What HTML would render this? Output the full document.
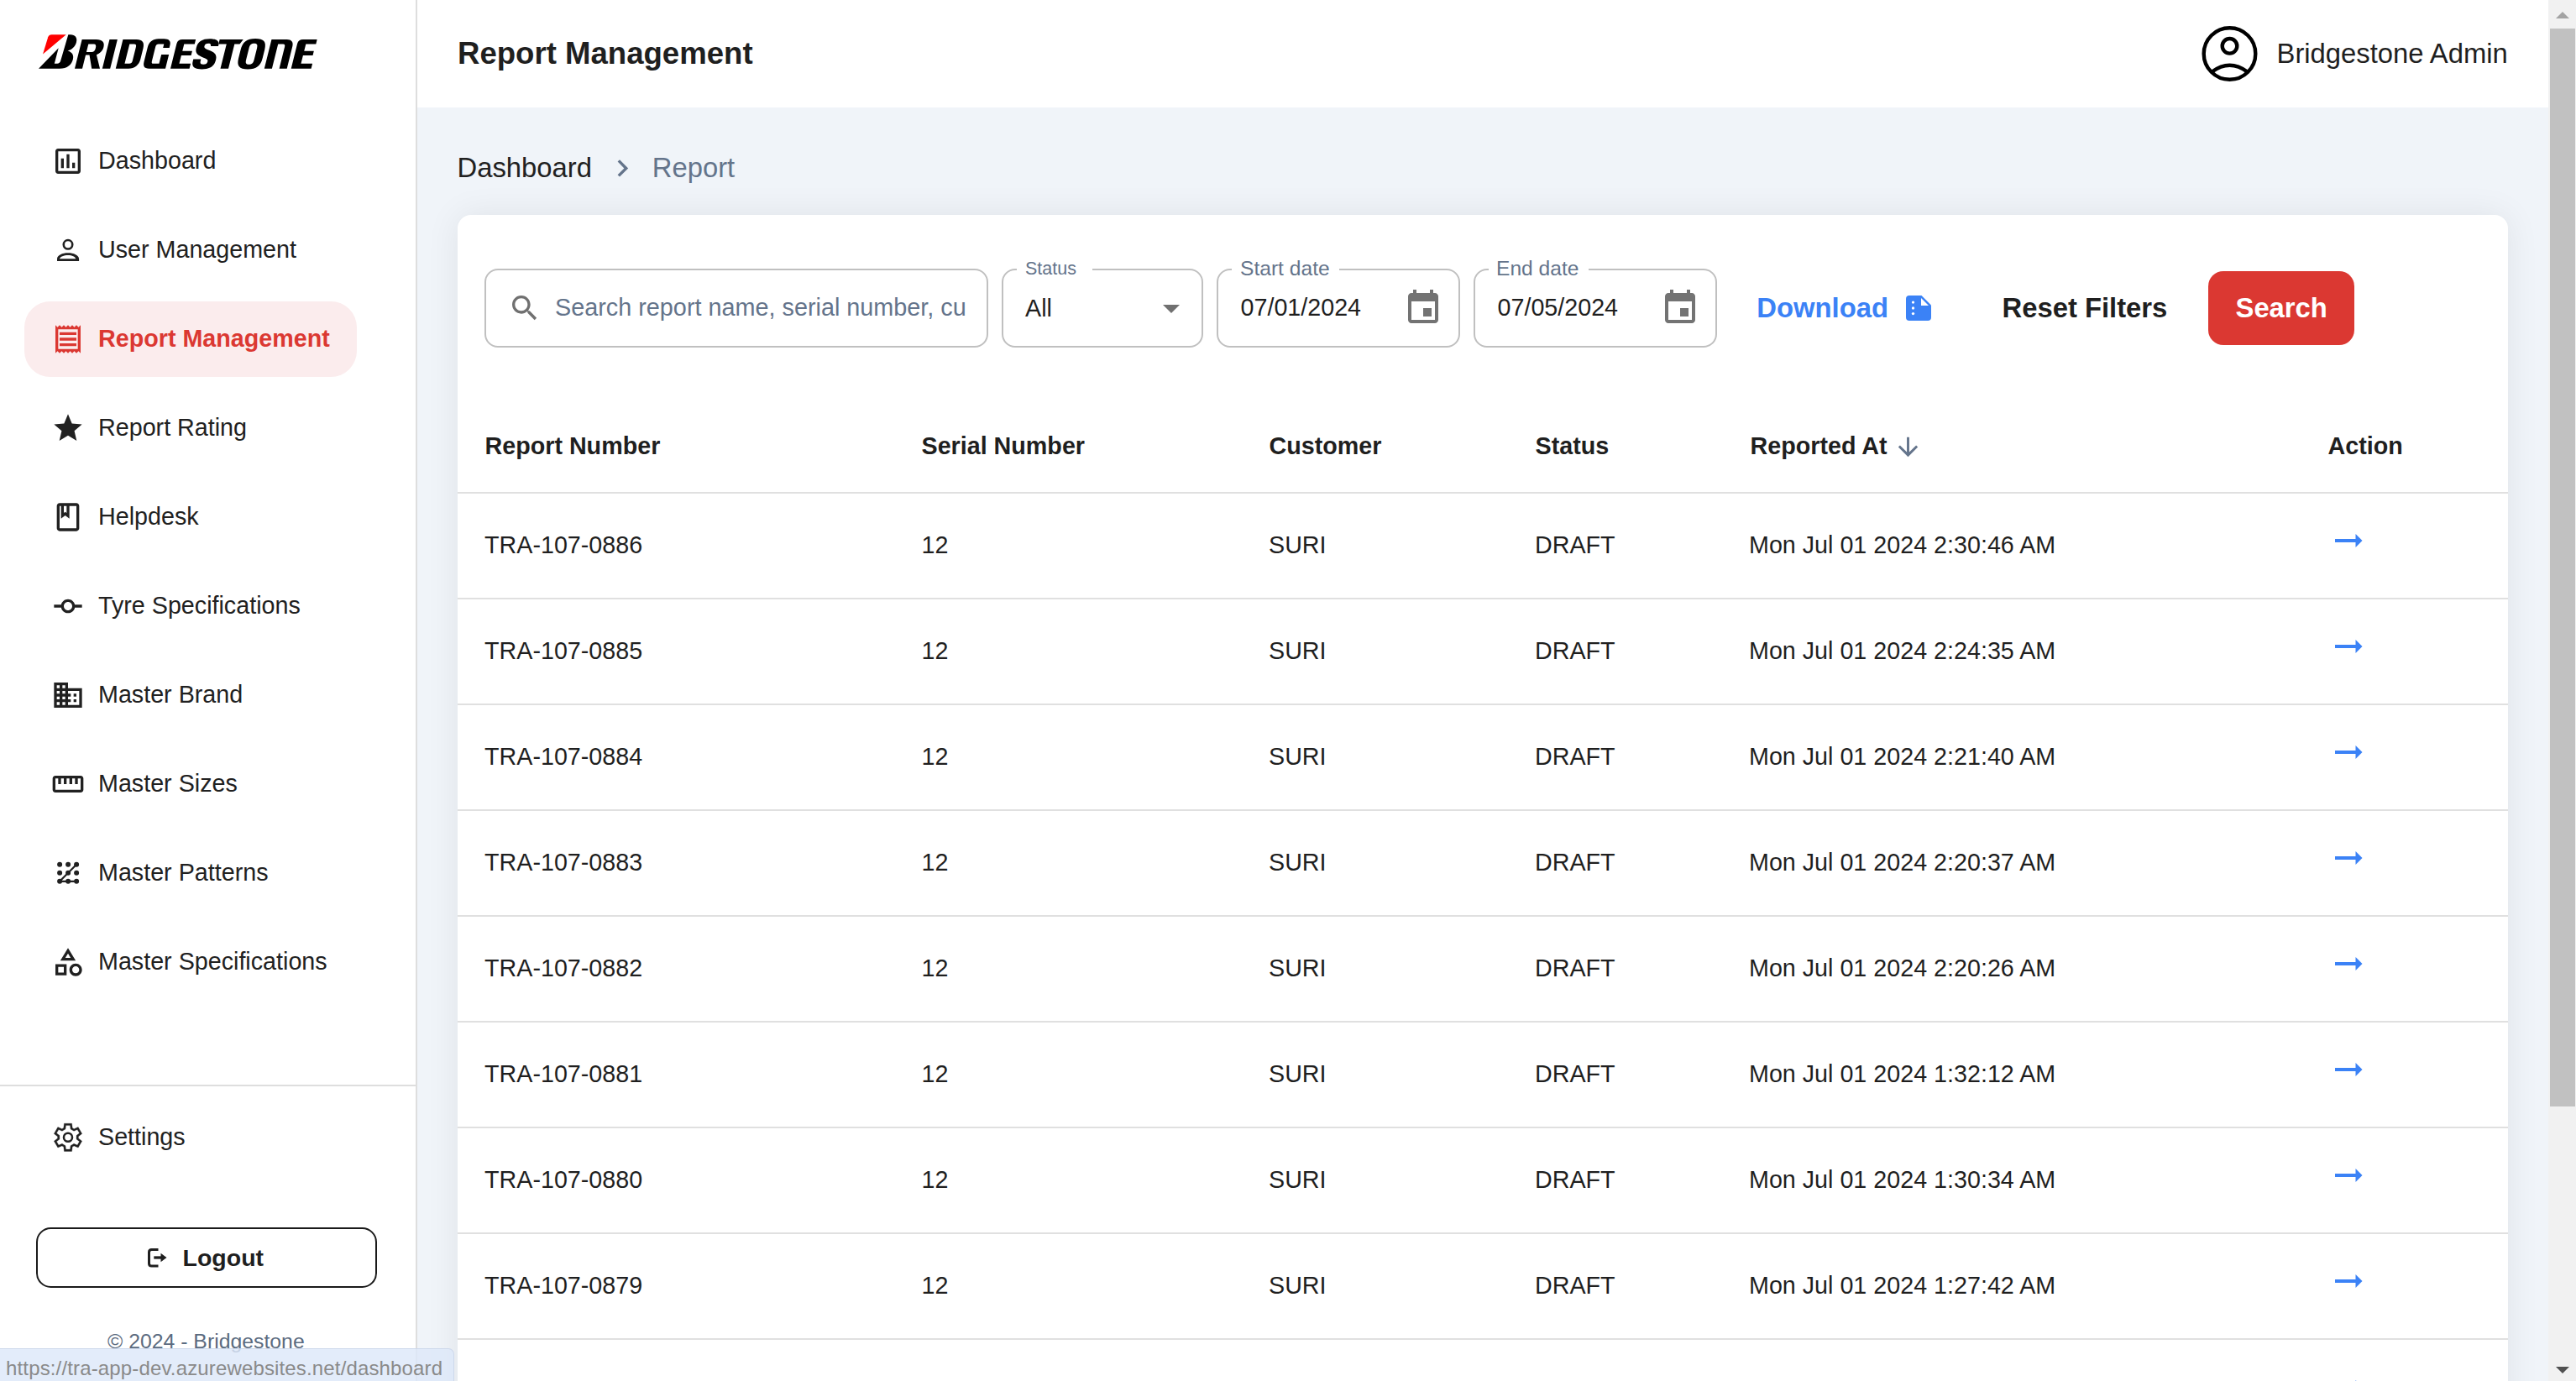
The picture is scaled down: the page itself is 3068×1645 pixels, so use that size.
<!DOCTYPE html>
<html><head><meta charset="utf-8">
<style>
*{margin:0;padding:0;box-sizing:border-box}
html,body{width:3068px;height:1645px;overflow:hidden;background:#fff;font-family:"Liberation Sans",sans-serif;color:#212121}
.a{position:absolute}
.t{position:absolute;white-space:nowrap;line-height:1}
.nav{font-size:28.7px;color:#212121}
svg{position:absolute;overflow:visible}
</style></head><body>

<!-- SIDEBAR -->
<div class="a" id="sidebar" style="left:0;top:0;width:497px;height:1645px;background:#fff;border-right:2px solid #dedede"></div>

<!-- logo -->
<svg style="left:0;top:0" width="400" height="100" viewBox="0 0 400 100">
<path fill="#f00" d="M51.05 64.6L57.2 44.3Q58.3 41.25 61.5 41.25L78.75 41.25Z"/>
<path fill="#000" fill-rule="evenodd" d="M46 81.8L69.7 57.2L64.8 75.8L68.1 75.8Q71.3 75.8 72.3 72L81.3 41.25L84 41.25C89.5 41.25 92.5 45 90.9 50.5C89.6 55 86.5 58.8 80.6 60.6C85.6 62 88.2 65.5 86.9 70.5C85.5 77 80 81.8 71 81.8Z"/>
<g transform="translate(0 81.7) skewX(-14) translate(0 -81.7)" fill="#000" fill-rule="evenodd">
<path d="M89 81.7V47H106C113.5 47 117 50.5 117 56C117 60.5 114.5 63.8 110.8 65.2L119 81.7H109.2L102.5 65.5H98V81.7ZM98 52.4H104.5C106.8 52.4 107.8 54 107.8 57.2C107.8 60.6 106.5 62 104.3 62H98Z"/>
<path d="M121.8 81.7V47H131.2V81.7Z"/>
<path d="M137.8 81.7V47H154C161 47 164.5 50.5 164.5 57.5V70.5C164.5 77.5 160.5 81.7 153 81.7ZM147 52.4H152.5C154.5 52.4 155.5 53.5 155.5 56V72.5C155.5 74.8 154.5 75.8 152.5 75.8H147Z"/>
<path d="M197 81.7H177.5C171.5 81.7 169.5 78.5 169.5 73.5V56C169.5 50 173 46.2 180 46.2H186.5C192.5 46.2 195.5 49 195.5 53.5V56.9H188V52.4H181.5C179.7 52.4 178.7 53.5 178.7 55.5V73C178.7 75 179.5 75.8 181 75.8H188V65H197Z"/>
<path d="M203 81.7V52C203 48.5 205 47 208.5 47H224.5V52.4H212V60.7H223.7V66H212V75.8H225.6V81.7Z"/>
<path d="M253.3 55V54.2C253.3 49.2 250 46.3 241 46.3C232 46.3 227.6 49.5 227.6 57C227.6 63 230.5 65.5 238.5 68.5C243.5 70.3 245.2 71 245.2 73.3C245.2 75.8 244 76.8 241 76.8C238 76.8 236.6 75.8 236.6 72.8V70.6H227.5V73.2C227.5 79.5 231.5 82.4 240.5 82.4C250 82.4 254.5 79.5 254.5 71.5C254.5 65 251 62.5 243.5 59.8C238.3 57.8 236.8 57 236.8 55C236.8 52.8 238 51.8 240.6 51.8C243.2 51.8 244.3 52.8 244.3 55Z"/>
<path d="M253 47H281.1L278.2 52.4H272V81.7H262.5V52.4H253Z"/>
<path d="M281 60C281 50 285 46.1 295.3 46.1C305.5 46.1 309.6 50 309.6 59V69.5C309.6 78.5 305.5 82.4 295.3 82.4C285 82.4 281 78.5 281 69.5ZM290.5 57.5C290.5 53.3 291.8 51.7 295.3 51.7C298.7 51.7 300 53.3 300 57.5V71C300 75.2 298.7 76.8 295.3 76.8C291.8 76.8 290.5 75.2 290.5 71Z"/>
<path d="M314.8 81.7V47H333C338.5 47 341.7 50 341.7 55V81.7H332.6V55.5C332.6 53.3 331.5 52.4 330 52.4H323.9V81.7Z"/>
<path d="M346.7 81.7V52C346.7 48.5 348.7 47 352.2 47H369V52.4H357V60.7H368.6V66H357V75.8H370.6V81.7Z"/>
</g>
</svg>

<!-- active pill -->
<div class="a" style="left:29px;top:359px;width:396px;height:90px;border-radius:31px;background:#fbeced"></div>

<!-- nav items -->
<div class="t nav" style="left:117px;top:176.5px">Dashboard</div>
<div class="t nav" style="left:117px;top:282.5px">User Management</div>
<div class="t nav" style="left:117px;top:388.5px;color:#db3832;font-weight:bold">Report Management</div>
<div class="t nav" style="left:117px;top:494.5px">Report Rating</div>
<div class="t nav" style="left:117px;top:600.5px">Helpdesk</div>
<div class="t nav" style="left:117px;top:706.5px">Tyre Specifications</div>
<div class="t nav" style="left:117px;top:812.5px">Master Brand</div>
<div class="t nav" style="left:117px;top:918.5px">Master Sizes</div>
<div class="t nav" style="left:117px;top:1024.5px">Master Patterns</div>
<div class="t nav" style="left:117px;top:1130.5px">Master Specifications</div>

<!-- divider -->
<div class="a" style="left:0;top:1292px;width:495px;height:2px;background:#dedede"></div>
<div class="t nav" style="left:117px;top:1340px">Settings</div>

<!-- logout -->
<div class="a" style="left:43px;top:1462px;width:406px;height:72px;border:2.4px solid #1a1a1a;border-radius:17.5px"></div>
<div class="t" style="left:217.5px;top:1483.6px;font-size:28.5px;font-weight:bold;color:#1f1f1f">Logout</div>

<div class="t" style="left:128px;top:1585.7px;font-size:24.8px;color:#5b6b80">© 2024 - Bridgestone</div>

<!-- HEADER -->
<div class="a" style="left:497px;top:0;width:2538px;height:128px;background:#fff"></div>
<div class="t" style="left:545px;top:46px;font-size:36.6px;font-weight:bold;color:#1f1f1f">Report Management</div>
<div class="t" style="left:2711.5px;top:47.6px;font-size:32.8px;color:#1f1f1f">Bridgestone Admin</div>


<!-- account icon -->
<svg style="left:0;top:0" width="1" height="1"><circle cx="2655.5" cy="64" r="30.8" fill="none" stroke="#000" stroke-width="4.4"/><circle cx="2655.5" cy="54.8" r="8.8" fill="none" stroke="#000" stroke-width="4.4"/><path d="M2634.5 85.5Q2655.5 70 2676.5 85.5" fill="none" stroke="#000" stroke-width="4.4"/></svg>

<!-- MAIN BG -->
<div class="a" style="left:497px;top:128px;width:2538px;height:1517px;background:#f0f4f9"></div>

<!-- breadcrumb -->
<div class="t" style="left:544.5px;top:184px;font-size:32.8px;color:#212121">Dashboard</div>
<div class="t" style="left:776.8px;top:184px;font-size:32.8px;color:#64748b">Report</div>
<svg style="left:720.8px;top:179.8px" width="40.8" height="40.8" viewBox="0 0 24 24"><path fill="#64748b" d="M10 6 8.59 7.41 13.17 12l-4.58 4.59L10 18l6-6z"/></svg>
<!-- CARD -->


<div class="a" style="left:545px;top:256px;width:2442px;height:1500px;background:#fff;border-radius:16px;box-shadow:0 0 40px rgba(20,20,30,0.075)"></div>


<!-- FILTERS -->
<div class="a" style="left:577px;top:320px;width:600px;height:94px;border:2px solid #c0c0c0;border-radius:16px"></div>
<svg style="left:605px;top:347px" width="40" height="40" viewBox="0 0 24 24"><path fill="#707070" d="M15.5 14h-.79l-.28-.27C15.41 12.59 16 11.11 16 9.5 16 5.91 13.09 3 9.5 3S3 5.91 3 9.5 5.91 16 9.5 16c1.61 0 3.09-.59 4.23-1.57l.27.28v.79l5 4.99L20.49 19l-4.99-5zm-6 0C7.01 14 5 11.99 5 9.5S7.01 5 9.5 5 14 7.01 14 9.5 11.99 14 9.5 14z"/></svg>
<div class="a" style="left:660px;top:340px;width:490px;height:50px;overflow:hidden"><div class="t" style="left:1px;top:11.6px;font-size:28.8px;color:#64748b">Search report name, serial number, customer</div></div>

<!-- status -->
<div class="a" style="left:1193px;top:320px;width:240px;height:94px;border:2px solid #c0c0c0;border-radius:16px"></div>
<div class="a" style="left:1211px;top:316px;width:90px;height:8px;background:#fff"></div>
<div class="t" style="left:1221px;top:309.5px;font-size:21.5px;color:#64748b">Status</div>
<div class="t" style="left:1221px;top:352.9px;font-size:28.7px;color:#1f1f1f">All</div>
<svg style="left:1370.5px;top:343px" width="48" height="48" viewBox="0 0 24 24"><path fill="#707070" d="M7 10l5 5 5-5z"/></svg>

<!-- start date -->
<div class="a" style="left:1449px;top:320px;width:290px;height:94px;border:2px solid #c0c0c0;border-radius:16px"></div>
<div class="a" style="left:1467px;top:316px;width:128px;height:8px;background:#fff"></div>
<div class="t" style="left:1477px;top:307.6px;font-size:24.6px;color:#64748b">Start date</div>
<div class="t" style="left:1477.5px;top:351.9px;font-size:28.7px;color:#1f1f1f">07/01/2024</div>
<svg style="left:1671px;top:343px" width="48" height="48" viewBox="0 0 24 24"><path fill="#737373" d="M17 12h-5v5h5v-5zM16 1v2H8V1H6v2H5c-1.11 0-1.99.9-1.99 2L3 19c0 1.1.89 2 2 2h14c1.1 0 2-.9 2-2V5c0-1.1-.9-2-2-2h-1V1h-2zm3 18H5V8h14v11z"/></svg>

<!-- end date -->
<div class="a" style="left:1755px;top:320px;width:290px;height:94px;border:2px solid #c0c0c0;border-radius:16px"></div>
<div class="a" style="left:1773px;top:316px;width:119px;height:8px;background:#fff"></div>
<div class="t" style="left:1782px;top:307.6px;font-size:24.6px;color:#64748b">End date</div>
<div class="t" style="left:1783.5px;top:351.9px;font-size:28.7px;color:#1f1f1f">07/05/2024</div>
<svg style="left:1977px;top:343px" width="48" height="48" viewBox="0 0 24 24"><path fill="#737373" d="M17 12h-5v5h5v-5zM16 1v2H8V1H6v2H5c-1.11 0-1.99.9-1.99 2L3 19c0 1.1.89 2 2 2h14c1.1 0 2-.9 2-2V5c0-1.1-.9-2-2-2h-1V1h-2zm3 18H5V8h14v11z"/></svg>

<!-- download -->
<div class="t" style="left:2092.3px;top:351.2px;font-size:32.8px;font-weight:bold;color:#3b82f6">Download</div>
<svg style="left:0;top:0" width="1" height="1"><path d="M2274 352H2288.5L2300 363.5V378Q2300 382 2296 382H2274Q2270 382 2270 378V356Q2270 352 2274 352Z" fill="#3b82f6"/><path d="M2288 355V364H2297Z" fill="#fff"/><g fill="#fff"><circle cx="2278.5" cy="360.1" r="1.7"/><circle cx="2278.5" cy="367" r="1.7"/><circle cx="2278.5" cy="373.6" r="1.7"/></g></svg>

<div class="t" style="left:2384.5px;top:351.2px;font-size:32.8px;font-weight:bold;color:#1f1f1f">Reset Filters</div>
<div class="a" style="left:2630px;top:323px;width:174px;height:88px;border-radius:18px;background:#db3832"></div>
<div class="t" style="left:2662.5px;top:351.2px;font-size:32.8px;font-weight:bold;color:#fff">Search</div>

<!-- TABLE -->
<div class="t" style="left:577.5px;top:517.2px;font-size:28.7px;font-weight:bold;color:#1f1f1f">Report Number</div>
<div class="t" style="left:1097.5px;top:517.2px;font-size:28.7px;font-weight:bold;color:#1f1f1f">Serial Number</div>
<div class="t" style="left:1511.5px;top:517.2px;font-size:28.7px;font-weight:bold;color:#1f1f1f">Customer</div>
<div class="t" style="left:1828.5px;top:517.2px;font-size:28.7px;font-weight:bold;color:#1f1f1f">Status</div>
<div class="t" style="left:2084.5px;top:517.2px;font-size:28.7px;font-weight:bold;color:#1f1f1f">Reported At</div>
<div class="t" style="left:2772.5px;top:517.2px;font-size:28.7px;font-weight:bold;color:#1f1f1f">Action</div>
<svg style="left:2255px;top:515.3px" width="35" height="35" viewBox="0 0 24 24"><path fill="#64748b" d="M20 12l-1.41-1.41L13 16.17V4h-2v12.17l-5.58-5.59L4 12l8 8 8-8z"/></svg>
<div class="a" style="left:545px;top:586px;width:2442px;height:2px;background:#e0e0e0"></div>
<div class="a" style="left:545px;top:712px;width:2442px;height:2px;background:#e0e0e0"></div>
<div class="a" style="left:545px;top:838px;width:2442px;height:2px;background:#e0e0e0"></div>
<div class="a" style="left:545px;top:964px;width:2442px;height:2px;background:#e0e0e0"></div>
<div class="a" style="left:545px;top:1090px;width:2442px;height:2px;background:#e0e0e0"></div>
<div class="a" style="left:545px;top:1216px;width:2442px;height:2px;background:#e0e0e0"></div>
<div class="a" style="left:545px;top:1342px;width:2442px;height:2px;background:#e0e0e0"></div>
<div class="a" style="left:545px;top:1468px;width:2442px;height:2px;background:#e0e0e0"></div>
<div class="a" style="left:545px;top:1594px;width:2442px;height:2px;background:#e0e0e0"></div>
<div class="t" style="left:577px;top:634.7px;font-size:28.7px;color:#1f1f1f">TRA-107-0886</div>
<div class="t" style="left:1097.5px;top:634.7px;font-size:28.7px;color:#1f1f1f">12</div>
<div class="t" style="left:1511px;top:634.7px;font-size:28.7px;color:#1f1f1f">SURI</div>
<div class="t" style="left:1828px;top:634.7px;font-size:28.7px;color:#1f1f1f">DRAFT</div>
<div class="t" style="left:2083px;top:634.7px;font-size:28.7px;color:#1f1f1f">Mon Jul 01 2024 2:30:46 AM</div>
<svg style="left:0;top:0" width="1" height="1"><path d="M2781 644H2806.5" stroke="#3b82f6" stroke-width="4"/><path d="M2805.5 636L2813.5 644L2805.5 652Z" fill="#3b82f6"/></svg>
<div class="t" style="left:577px;top:760.7px;font-size:28.7px;color:#1f1f1f">TRA-107-0885</div>
<div class="t" style="left:1097.5px;top:760.7px;font-size:28.7px;color:#1f1f1f">12</div>
<div class="t" style="left:1511px;top:760.7px;font-size:28.7px;color:#1f1f1f">SURI</div>
<div class="t" style="left:1828px;top:760.7px;font-size:28.7px;color:#1f1f1f">DRAFT</div>
<div class="t" style="left:2083px;top:760.7px;font-size:28.7px;color:#1f1f1f">Mon Jul 01 2024 2:24:35 AM</div>
<svg style="left:0;top:0" width="1" height="1"><path d="M2781 770H2806.5" stroke="#3b82f6" stroke-width="4"/><path d="M2805.5 762L2813.5 770L2805.5 778Z" fill="#3b82f6"/></svg>
<div class="t" style="left:577px;top:886.7px;font-size:28.7px;color:#1f1f1f">TRA-107-0884</div>
<div class="t" style="left:1097.5px;top:886.7px;font-size:28.7px;color:#1f1f1f">12</div>
<div class="t" style="left:1511px;top:886.7px;font-size:28.7px;color:#1f1f1f">SURI</div>
<div class="t" style="left:1828px;top:886.7px;font-size:28.7px;color:#1f1f1f">DRAFT</div>
<div class="t" style="left:2083px;top:886.7px;font-size:28.7px;color:#1f1f1f">Mon Jul 01 2024 2:21:40 AM</div>
<svg style="left:0;top:0" width="1" height="1"><path d="M2781 896H2806.5" stroke="#3b82f6" stroke-width="4"/><path d="M2805.5 888L2813.5 896L2805.5 904Z" fill="#3b82f6"/></svg>
<div class="t" style="left:577px;top:1012.7px;font-size:28.7px;color:#1f1f1f">TRA-107-0883</div>
<div class="t" style="left:1097.5px;top:1012.7px;font-size:28.7px;color:#1f1f1f">12</div>
<div class="t" style="left:1511px;top:1012.7px;font-size:28.7px;color:#1f1f1f">SURI</div>
<div class="t" style="left:1828px;top:1012.7px;font-size:28.7px;color:#1f1f1f">DRAFT</div>
<div class="t" style="left:2083px;top:1012.7px;font-size:28.7px;color:#1f1f1f">Mon Jul 01 2024 2:20:37 AM</div>
<svg style="left:0;top:0" width="1" height="1"><path d="M2781 1022H2806.5" stroke="#3b82f6" stroke-width="4"/><path d="M2805.5 1014L2813.5 1022L2805.5 1030Z" fill="#3b82f6"/></svg>
<div class="t" style="left:577px;top:1138.7px;font-size:28.7px;color:#1f1f1f">TRA-107-0882</div>
<div class="t" style="left:1097.5px;top:1138.7px;font-size:28.7px;color:#1f1f1f">12</div>
<div class="t" style="left:1511px;top:1138.7px;font-size:28.7px;color:#1f1f1f">SURI</div>
<div class="t" style="left:1828px;top:1138.7px;font-size:28.7px;color:#1f1f1f">DRAFT</div>
<div class="t" style="left:2083px;top:1138.7px;font-size:28.7px;color:#1f1f1f">Mon Jul 01 2024 2:20:26 AM</div>
<svg style="left:0;top:0" width="1" height="1"><path d="M2781 1148H2806.5" stroke="#3b82f6" stroke-width="4"/><path d="M2805.5 1140L2813.5 1148L2805.5 1156Z" fill="#3b82f6"/></svg>
<div class="t" style="left:577px;top:1264.7px;font-size:28.7px;color:#1f1f1f">TRA-107-0881</div>
<div class="t" style="left:1097.5px;top:1264.7px;font-size:28.7px;color:#1f1f1f">12</div>
<div class="t" style="left:1511px;top:1264.7px;font-size:28.7px;color:#1f1f1f">SURI</div>
<div class="t" style="left:1828px;top:1264.7px;font-size:28.7px;color:#1f1f1f">DRAFT</div>
<div class="t" style="left:2083px;top:1264.7px;font-size:28.7px;color:#1f1f1f">Mon Jul 01 2024 1:32:12 AM</div>
<svg style="left:0;top:0" width="1" height="1"><path d="M2781 1274H2806.5" stroke="#3b82f6" stroke-width="4"/><path d="M2805.5 1266L2813.5 1274L2805.5 1282Z" fill="#3b82f6"/></svg>
<div class="t" style="left:577px;top:1390.7px;font-size:28.7px;color:#1f1f1f">TRA-107-0880</div>
<div class="t" style="left:1097.5px;top:1390.7px;font-size:28.7px;color:#1f1f1f">12</div>
<div class="t" style="left:1511px;top:1390.7px;font-size:28.7px;color:#1f1f1f">SURI</div>
<div class="t" style="left:1828px;top:1390.7px;font-size:28.7px;color:#1f1f1f">DRAFT</div>
<div class="t" style="left:2083px;top:1390.7px;font-size:28.7px;color:#1f1f1f">Mon Jul 01 2024 1:30:34 AM</div>
<svg style="left:0;top:0" width="1" height="1"><path d="M2781 1400H2806.5" stroke="#3b82f6" stroke-width="4"/><path d="M2805.5 1392L2813.5 1400L2805.5 1408Z" fill="#3b82f6"/></svg>
<div class="t" style="left:577px;top:1516.7px;font-size:28.7px;color:#1f1f1f">TRA-107-0879</div>
<div class="t" style="left:1097.5px;top:1516.7px;font-size:28.7px;color:#1f1f1f">12</div>
<div class="t" style="left:1511px;top:1516.7px;font-size:28.7px;color:#1f1f1f">SURI</div>
<div class="t" style="left:1828px;top:1516.7px;font-size:28.7px;color:#1f1f1f">DRAFT</div>
<div class="t" style="left:2083px;top:1516.7px;font-size:28.7px;color:#1f1f1f">Mon Jul 01 2024 1:27:42 AM</div>
<svg style="left:0;top:0" width="1" height="1"><path d="M2781 1526H2806.5" stroke="#3b82f6" stroke-width="4"/><path d="M2805.5 1518L2813.5 1526L2805.5 1534Z" fill="#3b82f6"/></svg>
<div class="t" style="left:577px;top:1642.7px;font-size:28.7px;color:#1f1f1f">TRA-107-0878</div>
<div class="t" style="left:1097.5px;top:1642.7px;font-size:28.7px;color:#1f1f1f">12</div>
<div class="t" style="left:1511px;top:1642.7px;font-size:28.7px;color:#1f1f1f">SURI</div>
<div class="t" style="left:1828px;top:1642.7px;font-size:28.7px;color:#1f1f1f">DRAFT</div>
<div class="t" style="left:2083px;top:1642.7px;font-size:28.7px;color:#1f1f1f">Mon Jul 01 2024 1:25:10 AM</div>
<svg style="left:0;top:0" width="1" height="1"><path d="M2781 1652H2806.5" stroke="#3b82f6" stroke-width="4"/><path d="M2805.5 1644L2813.5 1652L2805.5 1660Z" fill="#3b82f6"/></svg>
<!-- scrollbar -->
<div class="a" style="left:3035px;top:0;width:33px;height:1645px;background:#f1f1f1"></div>
<div class="a" style="left:3037px;top:34px;width:30px;height:1284px;background:#c1c1c1"></div>


<!-- NAV ICONS -->
<svg style="left:61px;top:172px" width="40" height="40" viewBox="0 0 24 24"><path fill="#212121" d="M9 17H7v-7h2v7zm4 0h-2V7h2v10zm4 0h-2v-4h2v4zm2 2H5V5h14v14zm.1-16H4.9C3.8 3 3 3.9 3 5v14c0 1.1.8 2 1.9 2h14.2c1.1 0 1.9-.9 1.9-2V5c0-1.1-.8-2-1.9-2z"/></svg>
<svg style="left:61px;top:278px" width="40" height="40" viewBox="0 0 24 24"><circle cx="12" cy="7.98" r="3.15" fill="none" stroke="#212121" stroke-width="1.55"/><path fill="#212121" fill-rule="evenodd" d="M4.2 19.74V18.3C4.2 15.6 8 14 12 14S19.86 15.6 19.86 18.3V19.74ZM5.92 18.15C6.5 16.6 9 15.54 12 15.54S17.1 16.6 17.6 18.15Z"/></svg>
<svg style="left:61px;top:384px" width="40" height="40" viewBox="0 0 24 24"><path fill="#db3832" d="M19.5 3.5 18 2l-1.5 1.5L15 2l-1.5 1.5L12 2l-1.5 1.5L9 2 7.5 3.5 6 2 4.5 3.5 3 2v20l1.5-1.5L6 22l1.5-1.5L9 22l1.5-1.5L12 22l1.5-1.5L15 22l1.5-1.5L18 22l1.5-1.5L21 22V2l-1.5 1.5zM19 19.09H5V4.91h14v14.18zM6 15h12v2H6zm0-4h12v2H6zm0-4h12v2H6z"/></svg>
<svg style="left:61px;top:490px" width="40" height="40" viewBox="0 0 24 24"><path fill="#212121" d="M12 17.27 18.18 21l-1.64-7.03L22 9.24l-7.19-.61L12 2 9.19 8.63 2 9.24l5.46 4.73L5.82 21z"/></svg>
<svg style="left:61px;top:596px" width="40" height="40" viewBox="0 0 24 24"><path fill="#212121" d="M18 2H6c-1.1 0-2 .9-2 2v16c0 1.1.9 2 2 2h12c1.1 0 2-.9 2-2V4c0-1.1-.9-2-2-2zM9 4h2v5l-1-.75L9 9V4zm9 16H6V4h1v9l3-2.25L13 13V4h5v16z"/></svg>
<svg style="left:61px;top:702px" width="40" height="40" viewBox="0 0 24 24"><path fill="#212121" d="M16.9 11c-.46-2.28-2.48-4-4.9-4s-4.44 1.72-4.9 4H2v2h5.1c.46 2.28 2.48 4 4.9 4s4.44-1.72 4.9-4H22v-2h-5.1zM12 15c-1.65 0-3-1.35-3-3s1.35-3 3-3 3 1.35 3 3-1.35 3-3 3z"/></svg>
<svg style="left:61px;top:808px" width="40" height="40" viewBox="0 0 24 24"><path fill="#212121" d="M12 7V3H2v18h20V7H12zM6 19H4v-2h2v2zm0-4H4v-2h2v2zm0-4H4V9h2v2zm0-4H4V5h2v2zm4 12H8v-2h2v2zm0-4H8v-2h2v2zm0-4H8V9h2v2zm0-4H8V5h2v2zm10 12h-8v-2h2v-2h-2v-2h2v-2h-2V9h8v10zm-2-8h-2v2h2v-2zm0 4h-2v2h2v-2z"/></svg>
<svg style="left:61px;top:914px" width="40" height="40" viewBox="0 0 24 24"><path fill="#212121" d="M21 6H3c-1.1 0-2 .9-2 2v8c0 1.1.9 2 2 2h18c1.1 0 2-.9 2-2V8c0-1.1-.9-2-2-2zm0 10H3V8h2v4h2V8h2v4h2V8h2v4h2V8h2v4h2V8h2v8z"/></svg>
<svg style="left:0;top:0" width="1" height="1"><g fill="#212121"><circle cx="71.1" cy="1029.8" r="3"/><circle cx="81.1" cy="1029.8" r="3"/><circle cx="91.1" cy="1029.8" r="3"/><circle cx="71.1" cy="1039.8" r="3"/><circle cx="81.1" cy="1039.8" r="3"/><circle cx="91.1" cy="1039.8" r="3"/><circle cx="71.1" cy="1049.8" r="3"/><circle cx="81.1" cy="1049.8" r="3"/><circle cx="91.1" cy="1049.8" r="3"/></g><path d="M71.1 1049.8L91.1 1029.8M71.1 1049.8H91.1" stroke="#212121" stroke-width="2.2" fill="none"/></svg>
<svg style="left:61px;top:1126px" width="40" height="40" viewBox="0 0 24 24"><path fill="#212121" d="M12 2l-5.5 9h11L12 2zm0 3.84L13.93 9h-3.87L12 5.84zM17.5 13c-2.49 0-4.5 2.01-4.5 4.5s2.01 4.5 4.5 4.5 4.5-2.01 4.5-4.5-2.01-4.5-4.5-4.5zm0 7c-1.38 0-2.5-1.12-2.5-2.5s1.12-2.5 2.5-2.5 2.5 1.12 2.5 2.5-1.12 2.5-2.5 2.5zM3 21.5h8v-8H3v8zm2-6h4v4H5v-4z"/></svg>
<svg style="left:0;top:0" width="1" height="1"><path fill="#212121" fill-rule="evenodd" stroke="#212121" stroke-width="0.3" stroke-linejoin="round" d="M85.56 1338.20L86.23 1343.51L88.18 1344.63L93.12 1342.56L97.68 1350.44L93.41 1353.68L93.41 1355.92L97.68 1359.16L93.12 1367.04L88.18 1364.97L86.23 1366.09L85.56 1371.40L76.44 1371.40L75.77 1366.09L73.82 1364.97L68.88 1367.04L64.32 1359.16L68.59 1355.92L68.59 1353.68L64.32 1350.44L68.88 1342.56L73.82 1344.63L75.77 1343.51L76.44 1338.20ZM83.49 1340.55L84.04 1344.97L88.02 1347.25L92.12 1345.53L94.61 1349.82L91.06 1352.51L91.06 1357.09L94.61 1359.78L92.12 1364.07L88.02 1362.35L84.04 1364.63L83.49 1369.05L78.51 1369.05L77.96 1364.63L73.98 1362.35L69.88 1364.07L67.39 1359.78L70.94 1357.09L70.94 1352.51L67.39 1349.82L69.88 1345.53L73.98 1347.25L77.96 1344.97L78.51 1340.55Z"/><circle cx="81" cy="1354.8" r="5.05" fill="none" stroke="#212121" stroke-width="2.5"/></svg>
<!-- logout icon -->
<svg style="left:0;top:0" width="1" height="1"><path d="M188.5 1488.5H180.5Q177.5 1488.5 177.5 1491.5V1505Q177.5 1508 180.5 1508H188.5" fill="none" stroke="#1f1f1f" stroke-width="3"/><path d="M183.3 1498H193" stroke="#1f1f1f" stroke-width="3.3"/><path d="M191.5 1492.8L198.5 1498L191.5 1503.2Z" fill="#1f1f1f"/></svg>

<!-- scrollbar arrows -->
<svg style="left:0;top:0" width="1" height="1"><path d="M3044 22H3060L3052 14Z" fill="#a3a3a3"/><path d="M3044 1628H3060L3052 1636Z" fill="#505050"/></svg>
<!-- status bar -->
<div class="a" style="left:0;top:1606px;width:541px;height:40px;background:rgba(221,232,249,0.82);border-top:1px solid rgba(200,212,232,0.8);border-right:1px solid rgba(200,212,232,0.8);border-top-right-radius:7px"></div>
<div class="t" style="left:7px;top:1617.8px;font-size:24px;letter-spacing:0.15px;color:#8a8a8a">https://tra-app-dev.azurewebsites.net/dashboard</div>
</body></html>
